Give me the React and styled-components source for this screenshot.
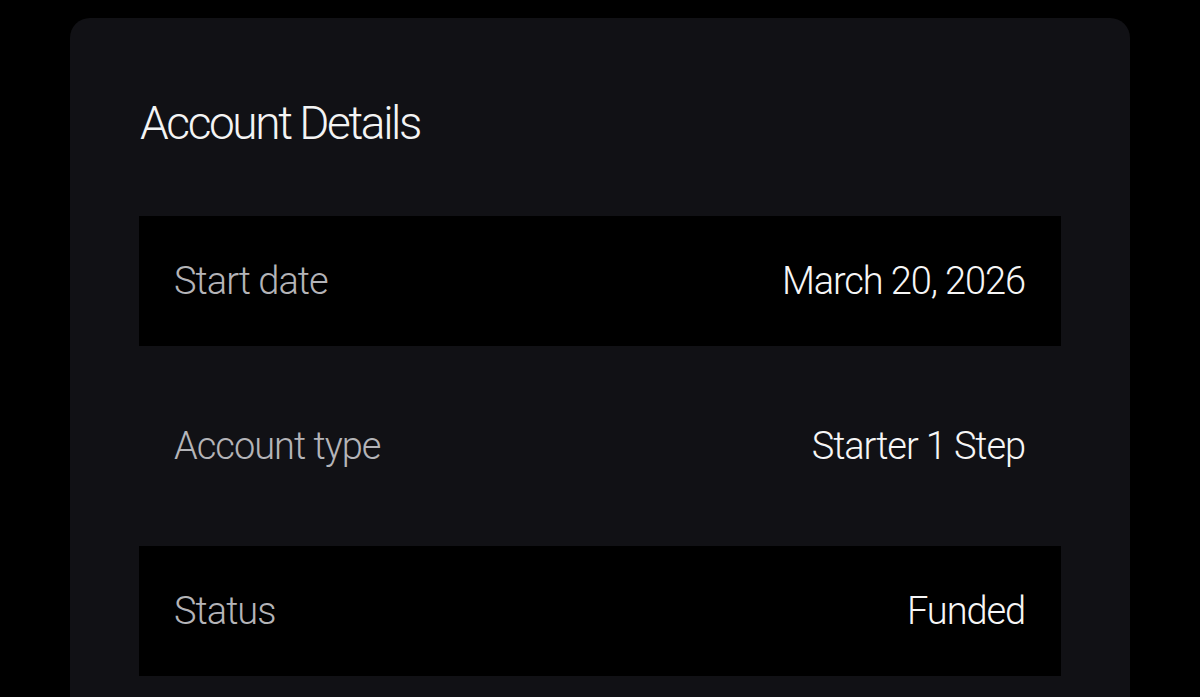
import React from "react";
import styled, { createGlobalStyle } from "styled-components";

const GlobalStyle = createGlobalStyle`
  html, body {
    margin: 0;
    padding: 0;
    background: #000;
  }
  body {
    font-family: Roboto, "Liberation Sans", sans-serif;
    -webkit-font-smoothing: antialiased;
  }
`;

const Page = styled.div`
  min-height: 697px;
  padding: 18px 70px 0;
  box-sizing: border-box;
  overflow: hidden;
`;

const Card = styled.section`
  background: #111115;
  border-radius: 20px;
  padding: 78px 69px 40px 69px;
  min-height: 760px;
  box-sizing: border-box;
`;

const Title = styled.h2`
  margin: 0 0 0 1px;
  font-weight: 300;
  font-size: 46px;
  line-height: 54px;
  letter-spacing: -2.4px;
  color: #f4f4f4;
`;

const List = styled.div`
  display: flex;
  flex-direction: column;
  gap: 35px;
  margin-top: 66px;
`;

const Row = styled.div`
  display: flex;
  align-items: center;
  justify-content: space-between;
  height: 130px;
  padding: 0 36px 0 35px;
  background: ${({ $shaded }) => ($shaded ? "#000" : "transparent")};
`;

const Label = styled.span`
  font-weight: 300;
  font-size: 38px;
  letter-spacing: -1px;
  color: #b4b4b8;
`;

const Value = styled.span`
  font-weight: 300;
  font-size: 38px;
  letter-spacing: -1.1px;
  color: #f6f6f6;
`;

const details = [
  { label: "Start date", value: "March 20, 2026" },
  { label: "Account type", value: "Starter 1 Step" },
  { label: "Status", value: "Funded" },
];

const App = () => {
  return (
    <>
      <GlobalStyle />
      <Page>
        <Card>
          <Title>Account Details</Title>
          <List>
            {details.map((item, i) => (
              <Row key={item.label} $shaded={i % 2 === 0}>
                <Label>{item.label}</Label>
                <Value>{item.value}</Value>
              </Row>
            ))}
          </List>
        </Card>
      </Page>
    </>
  );
};

export default App;
